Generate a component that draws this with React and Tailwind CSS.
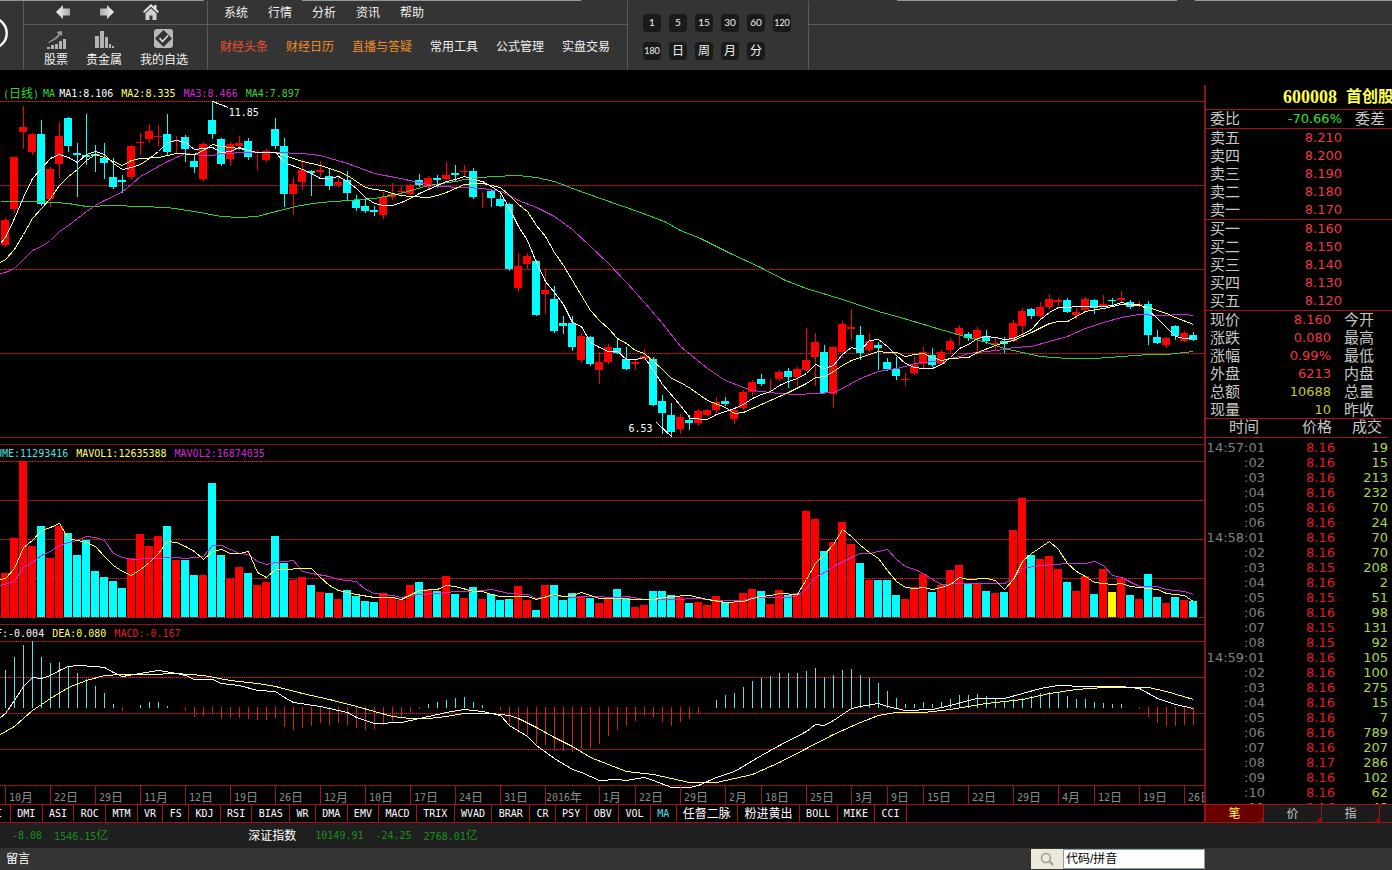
import React from "react";

/* One row per trading day: direction, body top, body bottom, high, low (plot pixels). */
const CANDLES = `
R 220 245 218 247|R 157 209 157 213|R 127 132 106 149|R 134 152 133 155|C 134 204 120 206|R 169 199 167 207
R 136 164 122 178|C 118 146 117 152|C 153 155 143 197|C 155 157 114 165|C 154 156 145 172|C 158 163 143 179
C 177 187 158 189|C 180 182 175 193|R 146 177 145 180|R 142 143 133 155|R 131 139 124 143|R 136 137 125 146
C 134 152 114 155|R 140 141 136 153|C 137 149 135 162|C 161 167 155 173|R 144 179 142 181|C 120 134 102 139
C 139 164 138 166|R 144 159 142 166|R 143 146 136 151|C 141 157 138 160|R 152 153 150 170|R 151 160 149 162
C 129 146 118 149|C 146 194 138 207|R 184 194 177 214|R 170 182 159 190|C 171 173 170 196|R 170 172 161 177
C 176 186 169 190|R 182 185 175 187|C 180 193 171 200|C 200 208 195 211|C 206 211 198 213|C 210 212 206 216
R 197 215 192 219|R 194 197 183 200|R 191 192 186 197|R 185 194 184 195|C 180 185 174 187|R 178 187 176 189
C 178 180 175 188|R 175 179 162 180|C 173 175 165 182|R 171 172 165 177|C 171 197 168 199|R 192 192 192 208
C 191 198 189 207|C 199 206 195 207|C 204 269 203 271|R 266 288 253 292|R 256 264 253 269|C 261 315 260 316
R 290 294 269 314|C 299 331 286 333|C 323 326 316 334|C 323 347 316 351|R 336 360 333 363|C 337 364 336 366
R 362 370 352 384|R 347 362 344 364|C 348 353 339 354|C 359 369 347 370|R 362 364 359 370|R 356 359 349 360
C 359 405 357 406|C 401 413 395 434|C 415 432 403 437|R 417 429 414 434|C 420 423 415 430|R 411 423 409 426
R 410 415 409 417|R 402 410 397 413|C 401 404 397 406|R 410 419 408 424|R 392 408 390 410|R 382 392 380 396
C 379 384 374 386|R 379 379 379 391|R 372 379 370 381|C 371 377 368 388|R 369 377 367 386|R 360 370 328 371
R 342 357 333 386|C 352 393 345 394|R 347 394 347 408|R 324 352 321 358|R 327 329 309 340|C 335 353 326 360
R 341 350 333 352|C 345 348 342 370|C 362 369 358 371|C 369 376 357 380|R 379 380 373 386|R 365 373 356 375
R 352 364 347 368|C 355 365 348 367|R 352 364 350 365|R 341 350 338 353|R 328 335 325 345|C 334 338 332 341
R 330 339 327 354|C 336 341 330 344|R 343 345 337 351|C 341 344 337 353|R 323 341 320 342|R 311 326 308 336
C 309 316 308 319|R 307 316 302 320|R 299 307 294 310|R 300 302 298 306|C 300 312 298 313|R 312 315 308 319
R 299 310 297 312|C 300 308 299 314|R 304 306 295 307|C 300 301 298 305|R 298 300 291 302|C 302 307 300 309
R 304 305 301 308|C 304 335 301 345|C 337 343 330 344|R 338 345 337 348|C 326 336 325 340|R 333 341 331 342
C 335 340 332 341`
  .trim()
  .split(/[|\n]/)
  .map((row) => {
    const [dir, ...n] = row.split(" ");
    return [dir, ...n.map(Number)];
  });

const VOLUME_TOPS = [
  573, 538, 461, 546, 526, 558, 526, 533, 555, 540, 571, 577, 581, 588, 558, 534, 546, 536, 526, 560, 560, 575, 575,
  483, 555, 579, 567, 573, 585, 582, 536, 563, 580, 577, 585, 592, 593, 599, 590, 596, 601, 602, 593, 597, 600, 585,
  582, 589, 591, 576, 594, 598, 587, 599, 594, 600, 599, 586, 600, 610, 585, 585, 600, 593, 596, 598, 603, 598, 589,
  598, 607, 605, 591, 591, 595, 597, 603, 602, 605, 596, 602, 602, 593, 589, 591, 604, 590, 595, 593, 511, 519, 551,
  542, 522, 544, 563, 580, 580, 580, 595, 599, 587, 574, 592, 585, 570, 565, 584, 584, 591, 593, 592, 530, 498, 555,
  559, 556, 569, 582, 591, 576, 594, 569, 592, 578, 595, 599, 574, 597, 603, 597, 600, 601,
];

/* End of each MACD bar; 0 means the bar is too short to draw. */
const MACD_ENDS = [
  670, 657, 645, 641, 657, 663, 662, 666, 673, 679, 686, 693, 704, 711, 0, 705, 702, 702, 706, 0, 711, 717, 716, 714,
  719, 718, 718, 719, 720, 720, 718, 727, 730, 728, 726, 723, 725, 723, 725, 728, 730, 729, 725, 721, 717, 712, 709,
  704, 702, 700, 698, 697, 702, 705, 0, 710, 725, 733, 735, 744, 745, 751, 751, 752, 748, 748, 744, 736, 730, 726, 721,
  715, 718, 722, 726, 722, 719, 714, 0, 700, 695, 693, 687, 681, 678, 676, 673, 673, 673, 671, 668, 677, 675, 670, 669,
  675, 678, 683, 691, 698, 704, 704, 702, 704, 702, 699, 695, 695, 694, 696, 699, 701, 699, 698, 696, 693, 692, 693,
  696, 699, 699, 702, 703, 704, 704, 0, 709, 717, 723, 726, 726, 725, 725,
];

const MA1 =
  "0,243 5,237 14,218 23,197 32,178 41,168 50,158 59,154 68,157 77,162 86,154 95,151 104,154 113,163 122,169 131,167 140,164 149,158 158,151 167,142 176,140 185,142 194,149 203,148 212,147 221,152 230,151 239,147 248,150 257,152 275,152 284,162 302,169 311,173 320,178 329,178 338,176 347,181 356,188 365,197 374,203 383,205 392,205 401,202 410,198 419,193 428,189 437,185 446,181 455,179 464,176 473,179 482,181 491,186 500,192 509,208 518,226 527,240 536,262 545,281 554,292 563,304 572,322 581,326 590,342 599,347 608,351 617,351 626,359 635,359 644,357 653,370 662,384 680,405 690,418 707,419 716,414 734,408 743,404 752,398 761,394 770,391 779,385 788,381 797,378 806,373 815,364 824,368 833,365 842,354 851,347 860,350 869,340 878,339 887,346 896,355 905,363 914,367 923,368 932,368 941,364 950,357 959,348 968,344 977,338 986,336 995,337 1004,339 1013,338 1022,334 1031,329 1040,319 1049,312 1058,307 1067,307 1076,306 1103,306 1112,305 1121,302 1130,304 1139,304 1148,310 1157,318 1166,327 1175,336 1184,338 1193,337";
const MA2 =
  "0,262 5,259 14,249 23,234 32,218 41,208 50,198 59,185 68,176 77,169 86,160 95,154 104,157 113,161 122,165 131,160 140,158 158,157 176,153 194,154 203,150 212,144 221,146 239,148 257,152 275,152 284,155 302,161 320,165 338,171 347,175 356,181 365,187 374,189 383,190 392,193 401,195 410,196 428,197 437,195 446,192 455,188 464,184 473,183 482,183 491,185 500,187 509,195 518,204 527,211 536,225 545,236 554,252 563,265 572,280 581,295 590,310 599,320 608,328 617,338 626,343 635,350 644,353 653,361 662,369 671,378 680,382 690,388 707,400 725,407 734,413 743,412 752,408 770,400 788,392 806,383 815,377 824,376 833,371 842,365 851,360 860,357 869,354 878,351 887,352 896,352 905,356 914,354 923,353 932,357 941,360 950,358 968,357 977,352 995,345 1004,342 1013,340 1031,332 1049,323 1058,321 1067,321 1076,316 1085,311 1103,308 1121,304 1139,305 1148,307 1166,313 1175,317 1193,324";
const MA3 =
  "0,273 5,272 14,268 23,259 32,250 41,246 50,240 59,231 68,225 77,218 86,211 95,205 104,200 113,196 122,191 131,184 140,176 149,171 158,166 167,161 176,157 185,153 203,155 212,155 221,153 248,152 275,152 302,153 320,155 347,163 374,173 400,178 428,184 437,186 464,187 482,188 500,191 509,195 518,200 536,207 554,216 572,229 590,246 608,263 626,282 644,302 662,323 680,346 707,368 725,380 743,387 752,390 779,393 797,394 815,393 833,392 842,388 860,378 878,371 896,368 905,366 914,363 932,361 941,360 959,356 968,353 986,351 1004,349 1013,347 1031,346 1049,341 1067,336 1085,328 1103,322 1121,317 1139,314 1157,315 1184,314 1193,315";
const MA4 =
  "0,201 40,201 68,203 86,206 113,205 140,206 167,207 194,211 221,216 239,217 257,216 275,211 300,205 320,202 347,200 374,198 400,193 428,185 455,181 464,179 473,178 491,176 518,175 536,177 554,181 572,188 600,198 640,212 664,221 680,230 700,238 730,253 760,267 785,280 806,288 842,299 878,311 900,317 940,329 968,337 986,342 1004,348 1022,352 1040,356 1067,358 1094,358 1121,356 1148,354 1166,354 1184,352 1193,351";
const MAVOL1 =
  "0,579 5,578 14,568 23,547 32,540 41,530 50,527 59,523 68,538 77,540 86,542 95,546 104,556 113,565 122,571 131,575 140,569 149,562 158,553 167,541 176,542 185,546 194,551 203,559 212,551 221,549 230,553 239,553 248,551 257,572 266,577 275,569 311,568 320,577 329,585 338,590 356,594 374,597 392,597 401,599 419,590 437,589 446,585 455,586 473,591 482,591 491,594 500,596 527,596 536,599 554,594 563,596 572,595 581,592 599,598 617,598 635,599 653,599 671,596 689,595 707,599 725,602 743,601 752,598 761,596 770,595 779,593 797,594 806,579 815,563 824,554 833,544 842,529 851,536 860,545 869,552 878,558 887,570 896,581 905,587 914,588 923,587 932,589 941,587 950,584 959,577 968,579 986,578 995,580 1004,589 1013,579 1022,561 1031,553 1040,547 1049,541 1058,549 1067,563 1076,571 1085,576 1094,582 1112,584 1121,583 1130,586 1157,589 1166,593 1184,595 1193,601";
const MAVOL2 =
  "0,585 14,581 23,567 32,562 41,555 50,551 59,545 68,542 77,540 86,536 95,537 104,540 113,553 122,557 131,559 149,558 176,557 185,558 203,556 212,545 221,545 230,549 239,553 248,554 257,561 266,564 275,562 293,560 302,571 311,573 329,576 338,579 356,581 365,589 374,593 392,595 401,597 419,594 437,593 455,591 473,591 491,589 500,591 509,593 527,594 536,598 554,595 572,597 590,596 617,597 626,596 644,599 671,599 698,598 716,600 743,600 752,597 788,597 797,595 806,588 815,577 824,572 833,566 851,557 860,553 869,553 887,549 896,559 905,566 914,569 923,573 932,579 941,584 959,583 1004,583 1013,578 1022,568 1040,565 1067,563 1085,563 1094,561 1103,565 1112,575 1121,577 1139,586 1157,586 1166,589 1184,591 1193,594";
const DIF =
  "0,717 5,713 14,700 23,686 32,677 41,678 50,675 59,670 68,666 77,665 95,666 104,667 113,672 122,676 140,673 158,670 176,673 185,675 194,679 212,679 221,683 239,685 257,690 275,691 284,697 293,702 320,706 347,712 356,717 374,723 401,722 419,718 446,712 464,709 482,711 491,713 500,715 509,725 527,736 536,745 554,758 572,769 581,772 599,780 617,779 626,780 644,777 653,780 671,787 689,787 698,785 716,777 734,771 761,755 779,745 806,731 815,724 824,725 833,720 851,708 860,706 878,703 887,706 905,710 932,709 950,705 968,700 977,698 1004,698 1022,693 1040,688 1058,685 1085,686 1121,686 1139,688 1157,698 1175,704 1193,708";
const DEA =
  "0,734 14,726 32,710 50,698 68,687 86,680 104,675 122,674 149,674 176,673 203,675 230,680 257,683 275,686 302,693 329,699 356,706 374,711 392,716 410,718 428,718 446,716 464,713 491,713 509,715 518,718 536,727 554,737 572,746 590,757 608,764 626,771 653,774 689,782 716,782 734,778 752,774 779,762 806,748 833,734 860,722 878,715 896,712 923,712 950,709 986,703 1022,699 1049,693 1076,689 1103,687 1148,687 1166,691 1193,699";

const DATES = [
  ["10", "月", 45], ["22", "日", 45], ["29", "日", 45], ["11", "月", 45], ["12", "日", 45], ["19", "日", 45],
  ["26", "日", 45], ["12", "月", 45], ["10", "日", 45], ["17", "日", 45], ["24", "日", 45], ["31", "日", 45],
  ["2016", "年", 54], ["1", "月", 36], ["22", "日", 45], ["29", "日", 45], ["2", "月", 36], ["18", "日", 45],
  ["25", "日", 45], ["3", "月", 36], ["9", "日", 36], ["15", "日", 45], ["22", "日", 45], ["29", "日", 45],
  ["4", "月", 36], ["12", "日", 45], ["19", "日", 45], ["26", "日", 20],
];
const DATE_COLUMNS = DATES.map(([, , span]) => `minmax(0,${span}fr)`).join(" ");

const INDICATORS = [
  "DMI", "ASI", "ROC", "MTM", "VR", "FS", "KDJ", "RSI", "BIAS", "WR", "DMA", "EMV", "MACD", "TRIX", "WVAD", "BRAR",
  "CR", "PSY", "OBV", "VOL", "MA", "任督二脉", "粉进黄出", "BOLL", "MIKE", "CCI",
];

const ASKS = [["卖五", "8.210"], ["卖四", "8.200"], ["卖三", "8.190"], ["卖二", "8.180"], ["卖一", "8.170"]];
const BIDS = [["买一", "8.160"], ["买二", "8.150"], ["买三", "8.140"], ["买四", "8.130"], ["买五", "8.120"]];
const STATS = [
  ["现价", "8.160", "今开", false], ["涨跌", "0.080", "最高", false], ["涨幅", "0.99%", "最低", false],
  ["外盘", "6213", "内盘", false], ["总额", "10688", "总量", true], ["现量", "10", "昨收", true],
];
const TICKS = [
  ["14:57:01", "8.16", 19], [":02", "8.16", 15], [":03", "8.16", 213], [":04", "8.16", 232], [":05", "8.16", 70],
  [":06", "8.16", 24], ["14:58:01", "8.16", 70], [":02", "8.16", 70], [":03", "8.15", 208], [":04", "8.16", 2],
  [":05", "8.15", 51], [":06", "8.16", 98], [":07", "8.15", 131], [":08", "8.15", 92], ["14:59:01", "8.16", 105],
  [":02", "8.16", 100], [":03", "8.16", 275], [":04", "8.16", 15], [":05", "8.16", 7], [":06", "8.16", 789],
  [":07", "8.16", 207], [":08", "8.17", 286], [":09", "8.16", 102], [":10", "8.16", 62], [":11", "8.16", 48],
];

const MONO = "font-['DejaVu_Sans_Mono','Noto_Sans_CJK_SC',monospace] text-[10px]";
const RED = "#ff0000";
const CYAN = "#00ffff";

function Plot({ top, height, grid, children }) {
  return (
    <svg
      className="block w-full overflow-visible"
      height={height}
      viewBox={`0 ${top} 1204 ${height}`}
      preserveAspectRatio="none"
      shapeRendering="crispEdges"
      fill="none"
      aria-hidden="true"
    >
      {grid.map((y) => (
        <g key={y}>
          <line x1="0" x2="1204" y1={y + 0.5} y2={y + 0.5} stroke="#500808" />
          <line x1="0" x2="1204" y1={y + 0.5} y2={y + 0.5} stroke="#e0202a" strokeDasharray="1 1" />
        </g>
      ))}
      {children}
    </svg>
  );
}

function Line({ points, color }) {
  return <polyline points={points} stroke={color} transform="translate(0.5 0.5)" />;
}

function PriceChart() {
  return (
    <Plot top={101} height={343} grid={[101, 185, 269, 353, 437]}>
      {CANDLES.map(([dir, top, bottom, high, low], i) => (
        <g key={i} fill={dir === "R" ? RED : CYAN}>
          <rect x={9 * i + 5} y={high} width="1" height={low - high} />
          {bottom > top && <rect x={9 * i + 1} y={top} width="8" height={bottom - top} />}
        </g>
      ))}
      <Line points={MA4} color="#32cd32" />
      <Line points={MA3} color="#d028d8" />
      <Line points={MA2} color="#ffff70" />
      <Line points={MA1} color="#ffffff" />
      <Line points="212,101 228,107" color="#ffffff" />
      <Line points="656,422 672,437" color="#ffffff" />
    </Plot>
  );
}

function VolumeChart() {
  return (
    <Plot top={461} height={163} grid={[461, 500, 539, 578, 617]}>
      {VOLUME_TOPS.map((y, i) => (
        <rect
          key={i}
          x={9 * i + 1}
          y={y}
          width="8"
          height={617 - y}
          fill={i === 123 ? "#ffff00" : CANDLES[i][0] === "R" ? RED : CYAN}
        />
      ))}
      <Line points={MAVOL2} color="#d028d8" />
      <Line points={MAVOL1} color="#ffff50" />
    </Plot>
  );
}

function MacdChart() {
  return (
    <Plot top={641} height={145} grid={[641, 677, 713, 749, 785]}>
      {MACD_ENDS.map((y, i) =>
        y === 0 ? null : y < 708 ? (
          <rect key={i} x={9 * i + 5} y={y} width="1" height={708 - y} fill="#5ce0e0" />
        ) : (
          <rect key={i} x={9 * i + 5} y="707" width="1" height={y - 707} fill="#d02020" />
        )
      )}
      <Line points={DEA} color="#ffff60" />
      <Line points={DIF} color="#ffffff" />
    </Plot>
  );
}

function Arrow({ flip }) {
  return (
    <svg width="16" height="16" viewBox="0 0 16 16" className={flip ? "rotate-180" : ""} aria-hidden="true">
      <defs>
        <linearGradient id={flip ? "ar" : "al"} x1="0" x2="1">
          <stop offset="0" stopColor="#f4f4f4" />
          <stop offset="1" stopColor="#a8a8a8" />
        </linearGradient>
      </defs>
      <path d="M1 8 8 1v3.5h7v7H8V15z" fill={flip ? "url(#ar)" : "url(#al)"} />
    </svg>
  );
}

function Home() {
  return (
    <svg width="16" height="16" viewBox="0 0 16 16" aria-hidden="true">
      <path d="M8 0 0 7.6l1.3 1.3L8 2.7l6.700 6.200L16 7.600 13.500 5.200V1h-2.300v2z" fill="#e4e4e4" />
      <path d="M8 4.200 2.500 9.300V16H6.500v-4.500h3V16h4V9.300z" fill="#cfcfcf" />
    </svg>
  );
}

function StockIcon() {
  return (
    <svg width="20" height="20" viewBox="0 0 20 20" fill="#b4b4b4" aria-hidden="true">
      <path d="M1 18h3v2H1zM5 16h3v4H5zM9 15h3v5H9zM13 12h3v8h-3zM17 10h3v10h-3z" />
      <path d="M2 13.500 10 8l2.500-3L10.500 3 16 2v5l-1.500-1.500L11 9.500 3 14z" fill="#9a9a9a" />
    </svg>
  );
}

function MetalIcon() {
  return (
    <svg width="20" height="20" viewBox="0 0 20 20" fill="#b4b4b4" aria-hidden="true">
      <path d="M1 7h4v12H1zM6 2h4v17H6zM11 8h3v11h-3zM15 15h2v4h-2zM18 17h2v2h-2z" />
    </svg>
  );
}

function PicksIcon() {
  return (
    <svg width="20" height="20" viewBox="0 0 20 20" aria-hidden="true">
      <rect x="0" y="0" width="19" height="19" rx="3" fill="#b8b8b8" />
      <path d="M9.500 1 18 9.500 9.500 18 1 9.500z" fill="#333" />
      <path d="m5.500 9 3 3.500 5.500-6" fill="none" stroke="#d8d8d8" strokeWidth="1.800" />
    </svg>
  );
}

const GROOVE = "border-r border-[#5a5a5a]";

function Toolbar() {
  return (
    <header className="bg-[#343434] text-xs text-[#f0f0f0]">
      <div className="flex h-px" aria-hidden="true">
        <i className="w-[204px] bg-[#8e9a96]" />
        <i className="ml-[98px] w-[279px] bg-[#8e9a96]" />
        <i className="ml-[316px] w-[280px] bg-[#8e9a96]" />
        <i className="ml-[18px] flex-1 bg-[#8e9a96]" />
      </div>
      <div className="flex h-[69px]">
        <div className={`flex w-6 items-center overflow-hidden ${GROOVE}`}>
          <svg width="24" height="36" viewBox="0 0 24 36" aria-hidden="true">
            <circle cx="-9" cy="15" r="16" fill="none" stroke="#ffffff" strokeWidth="2.500" />
          </svg>
        </div>
        <div className={`flex w-[184px] flex-col ${GROOVE}`}>
          <div className="flex h-6 items-center gap-7 border-b border-[#5a5a5a] pb-0.5 pl-[31px]">
            <button type="button" aria-label="后退"><Arrow /></button>
            <button type="button" aria-label="前进"><Arrow flip /></button>
            <button type="button" aria-label="主页"><Home /></button>
          </div>
          <div className="flex flex-1 items-center gap-[18px] pl-5 leading-[14px]">
            <button type="button" className="flex flex-col items-center gap-1"><StockIcon />股票</button>
            <button type="button" className="flex flex-col items-center gap-1"><MetalIcon />贵金属</button>
            <button type="button" className="flex flex-col items-center gap-1"><PicksIcon />我的自选</button>
          </div>
        </div>
        <div className={`flex w-[420px] flex-col ${GROOVE}`}>
          <nav className="flex h-6 items-center gap-5 border-b border-[#5a5a5a] pl-4">
            {["系统", "行情", "分析", "资讯", "帮助"].map((m) => (
              <button type="button" key={m}>{m}</button>
            ))}
          </nav>
          <nav className="flex flex-1 items-center gap-[18px] pb-0.5 pl-3">
            <a href="#headlines" className="text-[#f0502c]">财经头条</a>
            <a href="#calendar" className="text-[#f08c28]">财经日历</a>
            <a href="#live" className="text-[#f08c28]">直播与答疑</a>
            <a href="#tools">常用工具</a>
            <a href="#formulas">公式管理</a>
            <a href="#trade">实盘交易</a>
          </nav>
        </div>
        <div className={`flex w-[181px] items-center pl-[15px] ${GROOVE}`}>
          <div className="grid grid-cols-[repeat(6,18px)] gap-x-2 gap-y-[10px] pt-0.5 font-['Lato','Noto_Sans_CJK_SC',sans-serif]">
            {["1", "5", "15", "30", "60", "120", "180"].map((p) => (
              <button
                type="button"
                key={p}
                className={`flex size-[18px] items-center justify-center rounded bg-[#1a1a1a] ${p.length > 2 ? "text-[9px]" : "text-[10px]"}`}
              >
                {p}
              </button>
            ))}
            {["日", "周", "月", "分"].map((p) => (
              <button type="button" key={p} className="flex size-[18px] items-center justify-center rounded bg-[#1a1a1a] text-xs">
                {p}
              </button>
            ))}
          </div>
        </div>
        <div className="flex-1">
          <div className="h-6 border-b border-[#5a5a5a]" />
        </div>
      </div>
    </header>
  );
}

function QuoteRow({ label, value, tone = "text-[#f03848]", width = "w-[136px]", extra }) {
  return (
    <div className="flex h-[18px] items-center gap-[13px] whitespace-nowrap leading-[18px]">
      <div className={`flex shrink-0 justify-between pl-1 ${width}`}>
        <span className="text-[15px]">{label}</span>
        <span className={tone}>{value}</span>
      </div>
      {extra && <span className="text-[15px]">{extra}</span>}
    </div>
  );
}

function QuotePanel() {
  return (
    <aside className="mt-[15px] w-[188px] shrink-0 overflow-hidden border-l-2 border-[#8c1418] font-['DejaVu_Sans','Noto_Sans_CJK_SC',sans-serif] text-[13px] text-[#c8c8c8]">
      <h1 className="flex h-6 items-center gap-[9px] whitespace-nowrap pl-[77px] font-['Liberation_Serif','Noto_Sans_CJK_SC',serif] text-lg font-bold leading-6 text-[#ffff50]">
        600008<span className="text-base leading-6">首创股份</span>
      </h1>
      <section className="border-t border-[#a01418]">
        <QuoteRow label="委比" value="-70.66%" tone="text-[#30e030]" extra="委差" />
      </section>
      <section className="border-t border-[#a01418]">
        {ASKS.map(([l, v]) => <QuoteRow key={l} label={l} value={v} />)}
      </section>
      <section className="border-t border-[#a01418]">
        {BIDS.map(([l, v]) => <QuoteRow key={l} label={l} value={v} />)}
      </section>
      <section className="h-[108px] overflow-hidden border-t border-[#a01418]">
        {STATS.map(([l, v, x, gold]) => (
          <QuoteRow key={l} label={l} value={v} extra={x} width="w-[125px]" tone={gold ? "text-[#c8c832]" : "text-[#f03848]"} />
        ))}
      </section>
      <div className="h-[386px] overflow-hidden border-t border-[#a01418]">
        <table className="w-[182px] table-fixed border-collapse text-right leading-[15px]">
          <thead>
            <tr className="h-[18px] border-b border-[#a01418] text-[15px]">
              <th className="w-[59px] p-0 pr-[6px] font-normal">时间</th>
              <th className="w-[70px] p-0 pr-[3px] font-normal">价格</th>
              <th className="w-[53px] p-0 pr-[6px] font-normal">成交</th>
            </tr>
          </thead>
          <tbody className="before:block before:h-0.5 before:content-['']">
            {TICKS.map(([t, p, v], i) => (
              <tr key={i} className="h-[15px]">
                <td className="p-0 text-[#808080]">{t}</td>
                <td className="p-0 text-[#e01c24]">{p}</td>
                <td className="p-0 text-[#a8d850]">{v}</td>
              </tr>
            ))}
          </tbody>
        </table>
      </div>
      <div className="flex h-[19px] border-y border-[#a01418] text-xs">
        {["笔", "价", "指", ""].map((t, i) => (
          <button
            type="button"
            key={i}
            aria-label={t || "更多"}
            className={`relative flex w-[58px] shrink-0 items-center justify-center border-r border-[#a01418] ${i === 0 ? "bg-[#680000] text-[#ffff50]" : "bg-[#1c1c1c]"}`}
          >
            {t}
            <svg className="absolute bottom-0 right-0" width="5" height="5" viewBox="0 0 5 5" aria-hidden="true">
              <path d="M5 0v5H0z" fill="#7a1010" />
            </svg>
          </button>
        ))}
      </div>
    </aside>
  );
}

function Charts() {
  return (
    <main className="min-w-0 flex-1 overflow-hidden">
      <section className="relative pt-4">
        <div className={`flex h-[15px] items-center gap-2 whitespace-nowrap pl-[3px] ${MONO}`}>
          <span className="flex items-center gap-1 text-[#3cd23c]">
            <span>(<span className="text-xs">日线</span>)</span>
            <span className="flex gap-1">MA<span className="text-white">MA1:8.106</span></span>
          </span>
          <span className="text-[#ffff70]">MA2:8.335</span>
          <span className="text-[#d028d8]">MA3:8.466</span>
          <span className="text-[#3cd23c]">MA4:7.897</span>
        </div>
        <PriceChart />
        <span className="absolute left-[19%] top-9 font-['DejaVu_Sans_Mono',monospace] text-[10px] leading-[14px] text-white">11.85</span>
        <span className="absolute bottom-2 left-[52.2%] font-['DejaVu_Sans_Mono',monospace] text-[10px] leading-[14px] text-white">6.53</span>
      </section>
      <section className="border-t border-[#8c1418]">
        <div className={`-ml-1 flex h-4 items-center gap-2 whitespace-nowrap ${MONO}`}>
          <span className="text-[#50e0e0]">UME:11293416</span>
          <span className="text-[#ffff70]">MAVOL1:12635388</span>
          <span className="text-[#d028d8]">MAVOL2:16874035</span>
        </div>
        <VolumeChart />
      </section>
      <section className="border-t border-[#8c1418]">
        <div className={`-ml-1 flex h-4 items-center gap-2 whitespace-nowrap ${MONO}`}>
          <span className="text-white">F:-0.004</span>
          <span className="text-[#ffff70]">DEA:0.080</span>
          <span className="text-[#e02020]">MACD:-0.167</span>
        </div>
        <MacdChart />
        <div className="grid h-[18px] overflow-hidden pl-[5px] text-[#8c8c8c]" style={{ gridTemplateColumns: DATE_COLUMNS }}>
          {DATES.map(([n, unit], i) => (
            <span
              key={i}
              className={`flex items-center whitespace-nowrap border-l border-[#a01418] pt-1 ${n === "2016" ? "" : "pl-[3px]"} ${MONO}`}
            >
              {n}<span className="text-xs leading-[14px]">{unit}</span>
            </span>
          ))}
        </div>
      </section>
      <div className={`flex h-[19px] overflow-hidden whitespace-nowrap border-y border-[#a01418] text-white ${MONO}`}>
        <button type="button" className="flex w-[11px] shrink-0 items-center justify-end border-r border-[#a01418] pr-2">I</button>
        <div className="flex w-[896px]">
          {INDICATORS.map((t) => (
            <button
              type="button"
              key={t}
              className={`flex flex-auto items-center justify-center border-r border-[#a01418] px-[6px] ${t === "MA" ? "text-[#50e0e0]" : ""} ${t.charCodeAt(0) > 255 ? "text-xs" : ""}`}
            >
              {t}
            </button>
          ))}
        </div>
      </div>
    </main>
  );
}

function Footer() {
  return (
    <footer className="text-xs text-white">
      <div className={`flex h-[25px] items-center whitespace-nowrap bg-[#1f1f1f] pl-3 text-[#189018] ${MONO}`}>
        <span>-8.08</span>
        <span className="ml-3">1546.15<span className="text-xs">亿</span></span>
        <span className="ml-[140px] text-xs text-white">深证指数</span>
        <span className="ml-[19px]">10149.91</span>
        <span className="ml-3">-24.25</span>
        <span className="ml-3">2768.01<span className="text-xs">亿</span></span>
      </div>
      <div className="flex h-[22px] items-center justify-between bg-[#343434] pl-[6px] pr-[187px]">
        <button type="button">留言</button>
        <label className="flex h-5 w-[174px] bg-[#ece9d8]">
          <span className="flex w-8 items-center justify-center">
            <svg width="14" height="14" viewBox="0 0 14 14" fill="none" stroke="#9c9c9c" aria-hidden="true">
              <circle cx="6" cy="6" r="4.500" strokeWidth="1.500" />
              <path d="m9.500 9.500 3.500 3.500" strokeWidth="2" />
            </svg>
          </span>
          <input
            type="text"
            aria-label="代码/拼音"
            defaultValue="代码/拼音"
            className="min-w-0 flex-1 border border-[#8a9ba8] bg-white px-0.5 text-xs text-black outline-none"
          />
        </label>
      </div>
    </footer>
  );
}

export default function App() {
  return (
    <div className="min-h-screen overflow-hidden bg-black font-['Liberation_Sans','Noto_Sans_CJK_SC',sans-serif]">
      <Toolbar />
      <div className="flex">
        <Charts />
        <QuotePanel />
      </div>
      <Footer />
    </div>
  );
}
